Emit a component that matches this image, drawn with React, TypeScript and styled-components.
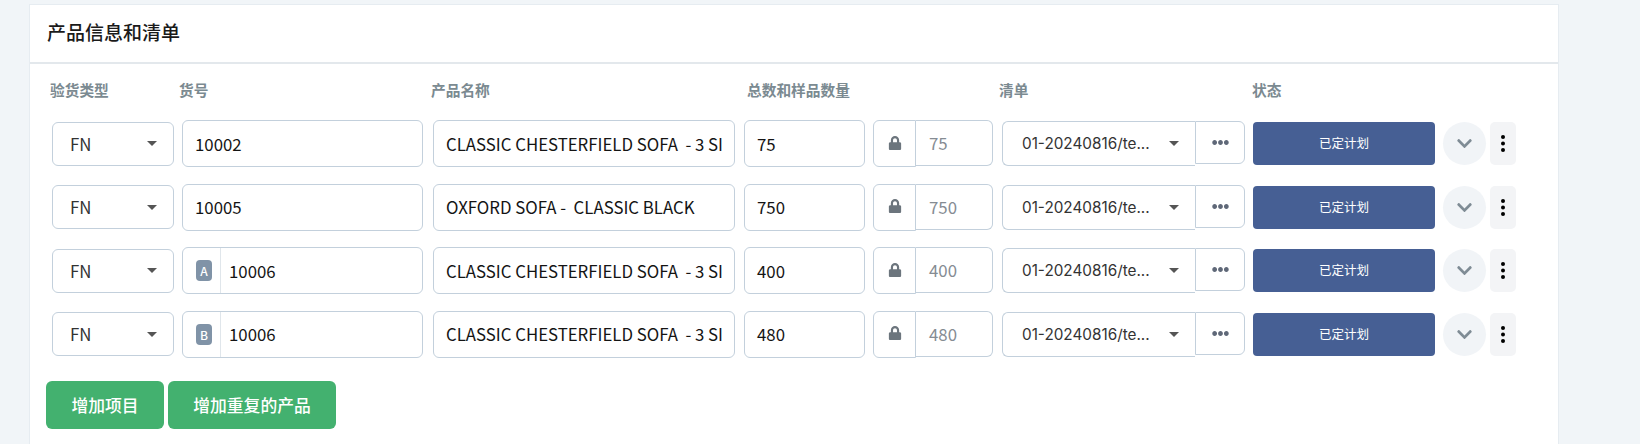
import React from "react";
import styled, { createGlobalStyle } from "styled-components";
import { FaLock, FaEllipsisH, FaChevronDown } from "react-icons/fa";

const Global = createGlobalStyle`
  html, body { margin: 0; padding: 0; background: #f1f5f8; }
  body { font-family: "Noto Sans CJK SC", "Noto Sans", sans-serif; overflow: hidden; }
  #root { width: 1640px; height: 444px; overflow: hidden; }
`;

const Page = styled.div`
  padding: 4px 81px 0 29px;
`;
const Card = styled.section`
  width: 1530px;
  height: 440px;
  background: #fff;
  border: 1px solid #e6ecf1;
  border-bottom: 0;
  box-sizing: border-box;
`;
const CardHeader = styled.header`
  height: 59px;
  box-sizing: border-box;
  padding: 0 0 4px 17px;
  display: flex;
  align-items: center;
  border-bottom: 2px solid #e3e8ec;
  font-size: 19px;
  font-weight: 500;
  color: #1a1a1a;
`;
const Body = styled.div`
  padding: 13px 0 0 16px;
`;
const Labels = styled.div`
  display: flex;
  height: 24px;
  align-items: center;
  padding-left: 4px;
  margin-bottom: 19px;
`;
const Label = styled.div<{ $w: number }>`
  width: ${(p) => p.$w}px;
  font-size: 14.7px;
  font-weight: 700;
  color: #7b8a91;
`;
const Row = styled.div`
  display: flex;
  align-items: center;
  height: 47px;
  margin-bottom: 16.5px;
  padding-left: 6px;
`;
const Field = styled.div<{ $w: number; $h?: number; $gap?: number }>`
  width: ${(p) => p.$w}px;
  height: ${(p) => p.$h ?? 47}px;
  margin-right: ${(p) => p.$gap ?? 8}px;
  box-sizing: border-box;
  flex: none;
  display: flex;
  align-items: center;
  border: 1px solid #c3d0dc;
  border-radius: 6px;
  background: #fff;
  font-size: 16.8px;
  color: #1c1c1c;
  overflow: hidden;
`;
const Value = styled.span<{ $pad?: number }>`
  flex: 1;
  min-width: 0;
  white-space: pre;
  padding-left: ${(p) => p.$pad ?? 12}px;
  color: #141414;
`;
const SelectText = styled.span`
  flex: 1;
  padding-left: 17px;
  color: #333;
`;
const Caret = styled.i`
  flex: none;
  width: 0;
  height: 0;
  margin-right: 16px;
  border-left: 5px solid transparent;
  border-right: 5px solid transparent;
  border-top: 5px solid #555;
`;
const Prefix = styled.div`
  flex: none;
  box-sizing: border-box;
  width: 38px;
  height: 100%;
  padding-left: 13px;
  display: flex;
  align-items: center;
  border-right: 1px solid #e0e6eb;
`;
const Badge = styled.span`
  width: 16px;
  height: 21px;
  border-radius: 4px;
  background: #8093a7;
  color: #fff;
  font-size: 12px;
  font-weight: 500;
  display: flex;
  align-items: center;
  justify-content: center;
`;
const LockGroup = styled.div`
  flex: none;
  width: 120px;
  height: 47px;
  margin-right: 9px;
  display: flex;
  align-items: flex-start;
`;
const LockBox = styled.div`
  flex: none;
  box-sizing: border-box;
  width: 43px;
  height: 47px;
  padding-bottom: 2px;
  display: flex;
  align-items: center;
  justify-content: center;
  border: 1px solid #c3d0dc;
  border-radius: 6px 0 0 6px;
  color: #6c757d;
  font-size: 14px;
`;
const LockValue = styled.div`
  flex: 1;
  box-sizing: border-box;
  height: 46px;
  padding-left: 13px;
  display: flex;
  align-items: center;
  border: 1px solid #c3d0dc;
  border-left: 0;
  border-radius: 0 6px 6px 0;
  font-size: 16.8px;
  color: #858c93;
`;
const ListSelect = styled(Field)`
  border-radius: 6px 0 0 6px;
  border-right: 0;
`;
const ListText = styled.span`
  flex: 1;
  padding-left: 19px;
  font-family: "Inter", sans-serif;
  font-size: 15.3px;
  color: #333;
  white-space: nowrap;
`;
const MoreBtn = styled.div`
  flex: none;
  width: 50px;
  height: 43px;
  box-sizing: border-box;
  margin: 0 8px 2px 0;
  border: 1px solid #c3d0dc;
  border-radius: 0 6px 6px 0;
  display: flex;
  align-items: center;
  justify-content: center;
  color: #5f6878;
  font-size: 17px;
`;
const Status = styled.div`
  flex: none;
  width: 182px;
  height: 43px;
  border-radius: 4px;
  background: #465f94;
  color: #fff;
  font-size: 12.5px;
  padding-bottom: 2px;
  box-sizing: border-box;
  display: flex;
  align-items: center;
  justify-content: center;
  margin-right: 8px;
`;
const Round = styled.div`
  flex: none;
  width: 43px;
  height: 43px;
  border-radius: 50%;
  background: #f1f4f7;
  color: #7f8c95;
  font-size: 17px;
  display: flex;
  align-items: center;
  justify-content: center;
  margin-right: 4px;
`;
const Kebab = styled.div`
  flex: none;
  width: 26px;
  height: 43px;
  border-radius: 5px;
  background: #f3f4f6;
  display: flex;
  align-items: center;
  justify-content: center;
`;
const Actions = styled.div`
  display: flex;
  gap: 4px;
  margin-top: 23.5px;
`;
const Green = styled.button<{ $w: number }>`
  width: ${(p) => p.$w}px;
  height: 48px;
  border: 0;
  border-radius: 6px;
  background: #43b16f;
  color: #fff;
  font-family: inherit;
  font-size: 16.8px;
  font-weight: 500;
  padding: 0;
`;

const KebabDots = () => (
  <svg width="4" height="17" viewBox="0 0 4 17" aria-hidden="true">
    <circle cx="2" cy="2" r="2" fill="#000" />
    <circle cx="2" cy="8.5" r="2" fill="#000" />
    <circle cx="2" cy="15" r="2" fill="#000" />
  </svg>
);

const rows = [
  { id: "10002", name: "CLASSIC CHESTERFIELD SOFA  - 3 SI", qty: "75" },
  { id: "10005", name: "OXFORD SOFA -  CLASSIC BLACK", qty: "750" },
  { id: "10006", tag: "A", name: "CLASSIC CHESTERFIELD SOFA  - 3 SI", qty: "400" },
  { id: "10006", tag: "B", name: "CLASSIC CHESTERFIELD SOFA  - 3 SI", qty: "480" },
];

export default function App() {
  return (
    <Page>
      <Global />
      <Card>
        <CardHeader>产品信息和清单</CardHeader>
        <Body>
          <Labels>
            <Label $w={129}>验货类型</Label>
            <Label $w={252}>货号</Label>
            <Label $w={316}>产品名称</Label>
            <Label $w={252}>总数和样品数量</Label>
            <Label $w={253}>清单</Label>
            <Label $w={100}>状态</Label>
          </Labels>
          {rows.map((r, i) => (
            <Row key={i}>
              <Field $w={122} $h={44}>
                <SelectText>FN</SelectText>
                <Caret />
              </Field>
              <Field $w={241} $gap={10}>
                {r.tag && (
                  <Prefix>
                    <Badge>{r.tag}</Badge>
                  </Prefix>
                )}
                <Value $pad={r.tag ? 8 : 12}>{r.id}</Value>
              </Field>
              <Field $w={302} $gap={9}>
                <Value $pad={12}>{r.name}</Value>
              </Field>
              <Field $w={121}>
                <Value $pad={12}>{r.qty}</Value>
              </Field>
              <LockGroup>
                <LockBox>
                  <FaLock />
                </LockBox>
                <LockValue>{r.qty}</LockValue>
              </LockGroup>
              <ListSelect $w={193} $h={45} $gap={0}>
                <ListText>01-20240816/te...</ListText>
                <Caret />
              </ListSelect>
              <MoreBtn>
                <FaEllipsisH />
              </MoreBtn>
              <Status>已定计划</Status>
              <Round>
                <FaChevronDown />
              </Round>
              <Kebab>
                <KebabDots />
              </Kebab>
            </Row>
          ))}
          <Actions>
            <Green $w={118}>增加项目</Green>
            <Green $w={168}>增加重复的产品</Green>
          </Actions>
        </Body>
      </Card>
    </Page>
  );
}
